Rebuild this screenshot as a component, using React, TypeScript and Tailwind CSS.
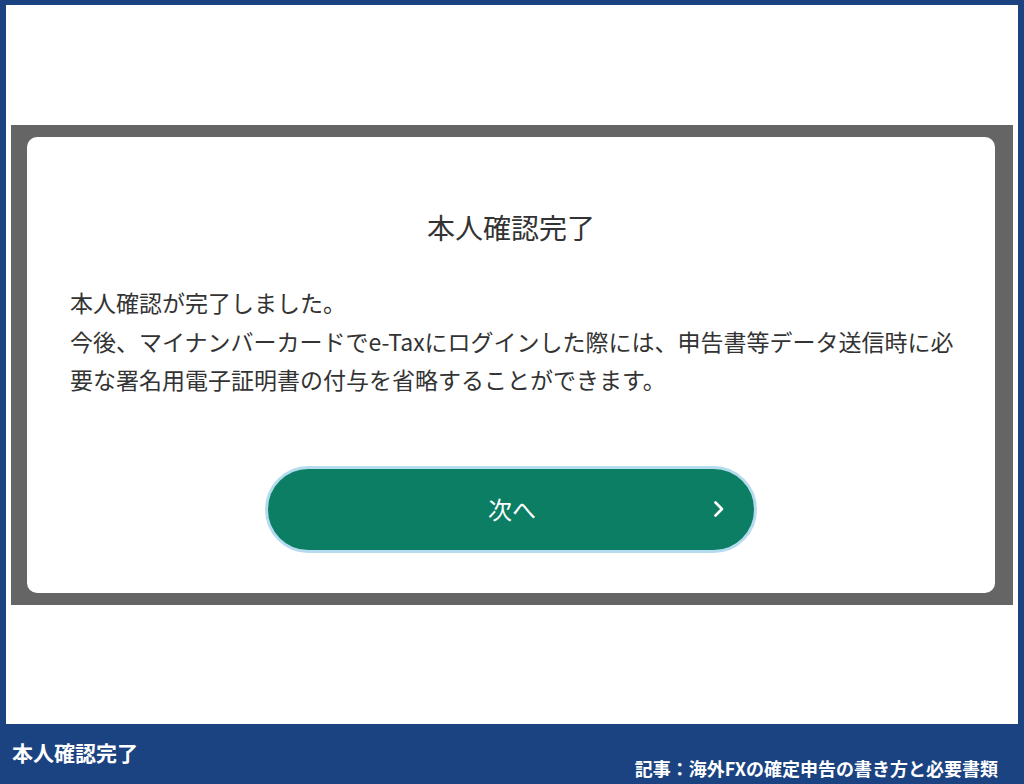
const JP = { fontFamily: '"Noto Sans CJK JP", "Noto Sans", sans-serif' };

export default function App() {
  return (
    <div className="flex h-[784px] w-[1024px] flex-col bg-[#1c4381]" style={JP}>
      {/* framed screenshot area */}
      <div className="flex flex-1 flex-col pl-[6px] pr-[6px] pt-[5px]">
        <div className="flex flex-1 flex-col bg-white pt-[120px]">
          <div className="mx-[5px] h-[480px] bg-[#646564] pb-[12px] pl-[16px] pr-[18px] pt-[12px]">
            <div className="flex h-full flex-col rounded-[10px] bg-white pl-[43px] pr-[25px] pt-[69px]">
              <h1 className="pr-[18px] text-center text-[28px] leading-[42px] text-[#333]">本人確認完了</h1>
              <p className="mt-[35px] text-[23px] leading-[38.5px] text-[#333]">
                本人確認が完了しました。
                <br />
                今後、マイナンバーカードでe-Taxにログインした際には、申告書等データ送信時に必要な署名用電子証明書の付与を省略することができます。
              </p>
              <div className="mt-[67px] flex justify-center pr-[18px]">
                <button className="relative flex h-[87px] w-[492px] items-center justify-center rounded-full border-[3px] border-[#b5dbef] bg-[#0c7e63] text-[24px] text-white">
                  <span className="ml-[2px]">次へ</span>
                  <svg
                    className="absolute right-[28px] top-1/2 -translate-y-1/2"
                    width="14"
                    height="18"
                    viewBox="0 0 14 18"
                    fill="none"
                  >
                    <path d="M3.5 2.5L10 9l-6.5 6.5" stroke="white" strokeWidth="2.6" strokeLinecap="round" strokeLinejoin="round" />
                  </svg>
                </button>
              </div>
            </div>
          </div>
        </div>
      </div>

      {/* caption bar */}
      <div className="flex h-[60px] flex-col px-3 text-white">
        <div className="mt-[16px] text-[21px] font-bold leading-[24px]">本人確認完了</div>
        <div className="-mt-[8px] self-end pr-[14px] text-[18px] font-bold leading-[24px]">
          記事：海外FXの確定申告の書き方と必要書類
        </div>
      </div>
    </div>
  );
}
